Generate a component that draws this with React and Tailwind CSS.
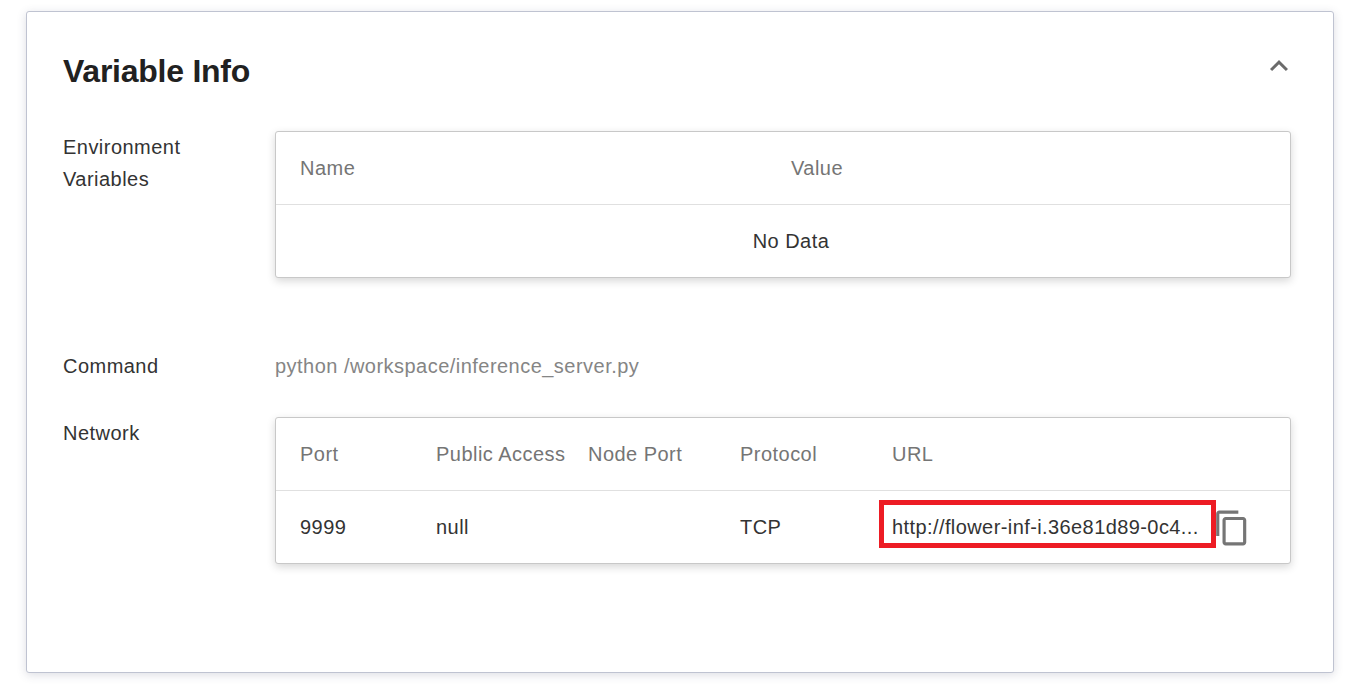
import React from 'react';

const networkRows = [{ port: '9999', access: 'null', nodePort: '', protocol: 'TCP' }];
const url = 'http://flower-inf-i.36e81d89-0c4...';

const Label = ({ children, className = '' }) => (
  <div className={`w-[212px] shrink-0 pr-10 text-[20px] leading-8 tracking-[0.47px] text-[#333333] ${className}`}>{children}</div>
);

const Head = ({ children, className = '' }) => (
  <th className={`h-[72px] border-b border-[#e0e0e0] pl-6 text-left text-[20px] font-normal tracking-[0.47px] whitespace-nowrap text-[#757575] ${className}`}>
    {children}
  </th>
);

const Cell = ({ children }) => (
  <td className="h-[73px] pl-6 text-left text-[20px] tracking-[0.47px] text-[#333333]">{children}</td>
);

const TableBox = ({ children, className = '' }) => (
  <div className={`w-[1016px] overflow-hidden rounded-[3px] border border-[#c8c8c8] bg-white shadow-[0_3px_8px_rgba(0,0,0,0.16)] ${className}`}>
    <table className="w-full table-fixed border-collapse">{children}</table>
  </div>
);

const App = () => {
  return (
    <div className="h-[685px] w-[1351px] overflow-hidden bg-white pl-[26px] pt-[11px] font-['Liberation_Sans',Arial,sans-serif]">
      <div className="h-[662px] w-[1308px] rounded-[3px] border border-[#bfc3d1] bg-white pl-9 pt-[36px] shadow-[0_2px_10px_rgba(60,64,100,0.18)]">
        <div className="flex h-[83px] w-[1234px] items-start justify-between">
          <h2 className="text-[32px] font-bold leading-[46px] tracking-[-0.25px] text-[#212121]">Variable Info</h2>
          <svg className="h-9 w-9 fill-[#6b6b6b]" viewBox="0 0 24 24">
            <path d="M12 8l-6 6 1.41 1.41L12 10.83l4.59 4.58L18 14z" />
          </svg>
        </div>

        <div className="flex">
          <Label>Environment Variables</Label>
          <TableBox>
            <colgroup>
              <col className="w-[491px]" />
              <col />
            </colgroup>
            <thead>
              <tr>
                <Head>Name</Head>
                <Head>Value</Head>
              </tr>
            </thead>
            <tbody>
              <tr>
                <td colSpan={2} className="h-[73px] pl-4 text-center text-[20px] tracking-[0.47px] text-[#333333]">No Data</td>
              </tr>
            </tbody>
          </TableBox>
        </div>

        <div className="mt-[72px] flex h-8 items-center">
          <Label>Command</Label>
          <div className="text-[20px] tracking-[0.47px] text-[#858585]">python /workspace/inference_server.py</div>
        </div>

        <div className="mt-[35px] flex">
          <Label>Network</Label>
          <TableBox>
            <colgroup>
              <col className="w-[136px]" />
              <col className="w-[152px]" />
              <col className="w-[152px]" />
              <col className="w-[152px]" />
              <col />
            </colgroup>
            <thead>
              <tr>
                <Head>Port</Head>
                <Head>Public Access</Head>
                <Head>Node Port</Head>
                <Head>Protocol</Head>
                <Head>URL</Head>
              </tr>
            </thead>
            <tbody>
              {networkRows.map((row) => (
                <tr key={row.port}>
                  <Cell>{row.port}</Cell>
                  <Cell>{row.access}</Cell>
                  <Cell>{row.nodePort}</Cell>
                  <Cell>{row.protocol}</Cell>
                  <td className="h-[73px] pl-[11px] pt-[9px] align-top">
                    <div className="flex items-start">
                      <div className="flex h-[48px] w-[337px] shrink-0 items-center border-[5px] border-[#ed1c24] pl-2 pt-[6px] text-[20px] tracking-[0.41px] whitespace-nowrap text-[#333333]">
                        {url}
                      </div>
                      <svg className="-ml-[3px] mt-[9px] h-[38px] w-[38px] shrink-0 fill-[#757575]" viewBox="0 0 24 24">
                        <path d="M16 1H4c-1.1 0-2 .9-2 2v14h2V3h12V1zm3 4H8c-1.1 0-2 .9-2 2v14c0 1.1.9 2 2 2h11c1.1 0 2-.9 2-2V7c0-1.1-.9-2-2-2zm0 16H8V7h11v14z" />
                      </svg>
                    </div>
                  </td>
                </tr>
              ))}
            </tbody>
          </TableBox>
        </div>
      </div>
    </div>
  );
};

export default App;
